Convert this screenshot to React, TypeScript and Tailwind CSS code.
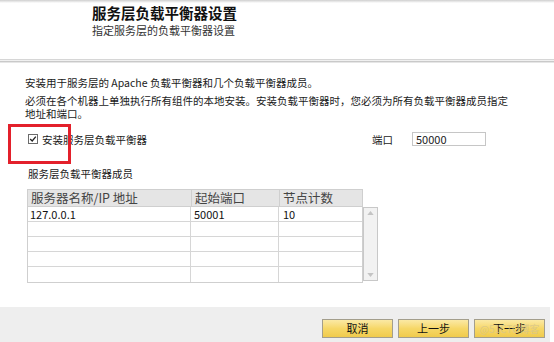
import React from "react";

const font = "font-['Noto_Sans_CJK_SC','Noto_Sans',sans-serif]";

function Checkbox() {
  return (
    <span className="flex h-[10px] w-[10px] items-center justify-center border border-[#6b6b6b] bg-white">
      <svg viewBox="0 0 10 10" className="h-[8px] w-[8px]">
        <path d="M1.5 5 L4 7.5 L8.5 2" fill="none" stroke="#222" strokeWidth="1.6" />
      </svg>
    </span>
  );
}

function Button({ label, mark }: { label: string; mark?: boolean }) {
  return (
    <div className="relative flex h-[19px] w-[71px] items-center justify-center border border-[#a39e8c] bg-gradient-to-b from-[#fbe9a4] via-[#f6d767] to-[#f0cb4c] text-[11px] text-[#111]">
      {label}
      {mark && (
        <span className="absolute inset-0 flex items-center justify-center text-[10px] text-[#d8c68a] opacity-80">
          @51CTO博客
        </span>
      )}
    </div>
  );
}

export default function App() {
  const rows = [
    ["127.0.0.1", "50001", "10"],
    ["", "", ""],
    ["", "", ""],
    ["", "", ""],
    ["", "", ""],
  ];

  return (
    <div className={`relative flex h-[342px] w-[554px] flex-col overflow-hidden bg-white ${font} text-[#222]`}>
      <div className="h-[3px] bg-gradient-to-b from-[#cfcfcf] to-white" />

      {/* header */}
      <div className="h-[56px] pl-[92px] pt-[1px]">
        <div className="text-[14.5px] font-bold leading-[18px] text-[#111]">服务层负载平衡器设置</div>
        <div className="mt-[2px] text-[11px] leading-[13px] text-[#333]">指定服务层的负载平衡器设置</div>
      </div>

      <div className="h-px bg-[#d6d6d6]" />
      <div className="h-px bg-[#f0f0f0]" />
      <div className="h-px bg-[#c9c9c9]" />
      <div className="h-px bg-[#e6e6e6]" />

      {/* body */}
      <div className="flex flex-col pl-[25px] text-[10.5px] leading-[13px] text-[#1a1a1a]">
        <p className="mt-[13px]">安装用于服务层的 Apache 负载平衡器和几个负载平衡器成员。</p>
        <p className="mt-[5px] w-[490px]">必须在各个机器上单独执行所有组件的本地安装。安装负载平衡器时，您必须为所有负载平衡器成员指定地址和端口。</p>

        <div className="mt-[12px] flex h-[14px] items-center">
          <div className="flex items-center gap-[4px] pl-[3px]">
            <Checkbox />
            <span className="text-[10.5px]">安装服务层负载平衡器</span>
          </div>
          <span className="ml-[225px] text-[10.5px]">端口</span>
          <div className="ml-[19px] flex h-[14px] w-[74px] items-center border border-[#c6c6c6] pl-[3px] text-[11px]">50000</div>
        </div>

        <div className="mt-[21px] pl-[3px]">服务层负载平衡器成员</div>

        {/* table */}
        <div className="mt-[9px] ml-[2px] flex">
          <div className="flex w-[336px] flex-col">
            <div className="grid h-[18px] grid-cols-[164px_88px_84px] border border-[#cfcfcf] bg-[#e5e5e5] text-[12.5px] leading-[16px] text-[#444]">
              <div className="border-r border-[#cfcfcf] pl-[3px]">服务器名称/IP 地址</div>
              <div className="border-r border-[#cfcfcf] pl-[3px]">起始端口</div>
              <div className="pl-[3px]">节点计数</div>
            </div>
            <div className="border-x border-b border-[#cfcfcf]">
              {rows.map((r, i) => (
                <div
                  key={i}
                  className={`grid h-[15px] grid-cols-[163px_88px_83px] text-[11px] leading-[14px] text-[#111] ${i < rows.length - 1 ? "border-b border-[#d6d6d6]" : ""}`}
                >
                  <div className="border-r border-[#d6d6d6] pl-[2px]">{r[0]}</div>
                  <div className="border-r border-[#d6d6d6] pl-[3px]">{r[1]}</div>
                  <div className="pl-[4px]">{r[2]}</div>
                </div>
              ))}
            </div>
          </div>
          <div className="mt-[18px] flex h-[74px] w-[15px] flex-col items-center justify-between border border-[#c8c8c8] bg-[#f2f2f2] py-[3px]">
            <svg viewBox="0 0 8 5" className="h-[4px] w-[7px]">
              <path d="M0 5 L4 0 L8 5 Z" fill="#c4c4c4" />
            </svg>
            <svg viewBox="0 0 8 5" className="h-[4px] w-[7px]">
              <path d="M0 0 L4 5 L8 0 Z" fill="#c4c4c4" />
            </svg>
          </div>
        </div>
      </div>

      {/* footer */}
      <div className="mt-auto flex h-[35px] w-[550px] items-start justify-end gap-[5px] bg-[#eeeeee] pr-[5px] pt-[12px]">
        <Button label="取消" />
        <Button label="上一步" />
        <Button label="下一步" mark />
      </div>

      {/* annotation */}
      <div className="absolute left-[8px] top-[124px] h-[40px] w-[63px] border-[3px] border-[#e3202b]" />
    </div>
  );
}
